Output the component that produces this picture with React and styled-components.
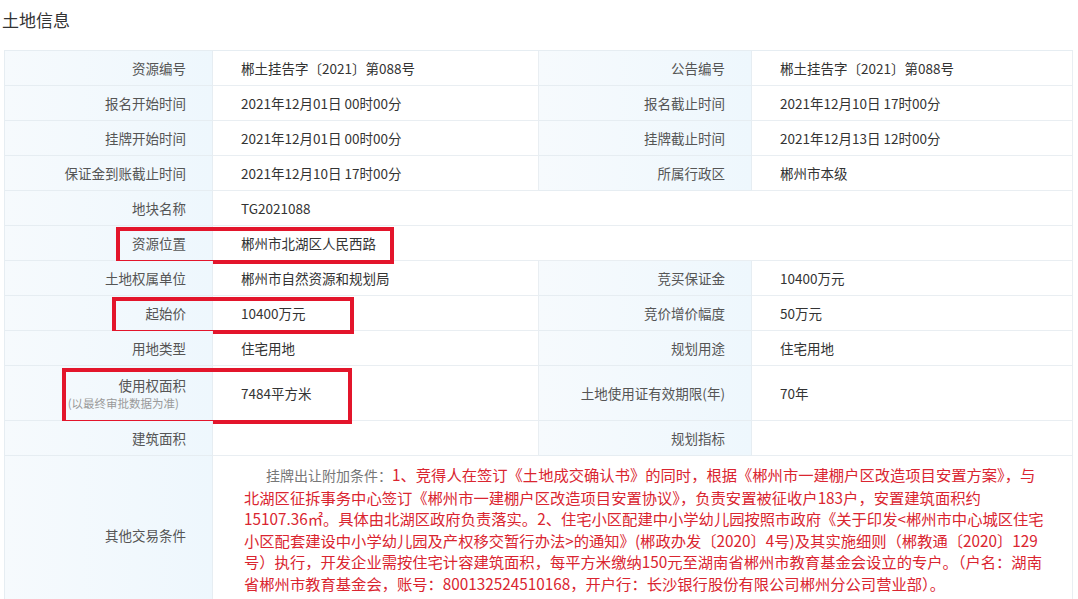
import React from 'react';
import styled, { createGlobalStyle } from 'styled-components';

const GlobalStyle = createGlobalStyle`
  body {
    margin: 0;
    background: #fff;
    font-family: "Noto Sans CJK SC", "Noto Sans", sans-serif;
  }
`;

const StyledWrapper = styled.div`
  width: 1078px;
  height: 599px;
  overflow: hidden;
  background: #fff;
`;

const StyledTitle = styled.h2`
  margin: 0;
  height: 50px;
  box-sizing: border-box;
  padding: 9px 0 0 2px;
  font-size: 17px;
  line-height: 22px;
  font-weight: 400;
  color: #333;
`;

const StyledTable = styled.div`
  margin-left: 4px;
  width: 1069px;
  border-left: 1px solid #e6edf2;
  border-top: 1px solid #e6edf2;
  box-sizing: border-box;
`;

const StyledRow = styled.div`
  position: relative;
  display: grid;
  grid-template-columns: 208px 326px 213px 321px;
  height: ${({ height }) => height || 35}px;
  box-sizing: border-box;
`;

const StyledLabel = styled.div`
  display: flex;
  flex-direction: column;
  justify-content: center;
  align-items: flex-end;
  padding-right: 26px;
  background: linear-gradient(to right, #f6fafd, #eef7fd);
  border-right: 1px solid #e6edf2;
  border-bottom: 1px solid #e6edf2;
  color: #555;
  font-size: 13.5px;
  line-height: 20px;
  white-space: nowrap;
`;

const StyledNote = styled.span`
  margin-right: 7px;
  font-size: 11.5px;
  line-height: 16px;
  color: #9a9a9a;
`;

const StyledValue = styled.div`
  grid-column: span ${({ span }) => span || 1};
  display: flex;
  align-items: center;
  padding-left: 28px;
  border-right: 1px solid #e9eef2;
  border-bottom: 1px solid #e9eef2;
  color: #333;
  font-size: 13.5px;
  white-space: nowrap;
`;

const StyledHighlight = styled.div`
  position: absolute;
  left: ${({ left }) => left}px;
  top: ${({ top }) => top}px;
  width: ${({ width }) => width}px;
  height: ${({ height }) => height}px;
  border: 4px solid #e3152b;
  box-sizing: border-box;
  pointer-events: none;
`;

const StyledTerms = styled.div`
  grid-column: span 3;
  padding: 8px 0 12px 31px;
  border-right: 1px solid #e9eef2;
  color: #da2530;
  font-size: 15.3px;
  line-height: 21.6px;
`;

const StyledLine = styled.span`
  display: block;
  white-space: nowrap;
`;

const StyledLead = styled.span`
  margin-left: 22px;
  color: #777;
  font-size: 14px;
`;

const rows = [
  ['资源编号', '郴土挂告字〔2021〕第088号', '公告编号', '郴土挂告字〔2021〕第088号'],
  ['报名开始时间', '2021年12月01日 00时00分', '报名截止时间', '2021年12月10日 17时00分'],
  ['挂牌开始时间', '2021年12月01日 00时00分', '挂牌截止时间', '2021年12月13日 12时00分'],
  ['保证金到账截止时间', '2021年12月10日 17时00分', '所属行政区', '郴州市本级'],
];

const termLines = [
  '北湖区征拆事务中心签订《郴州市一建棚户区改造项目安置协议》，负责安置被征收户183户，安置建筑面积约',
  '15107.36㎡。具体由北湖区政府负责落实。2、住宅小区配建中小学幼儿园按照市政府《关于印发<郴州市中心城区住宅',
  '小区配套建设中小学幼儿园及产权移交暂行办法>的通知》(郴政办发〔2020〕4号)及其实施细则（郴教通〔2020〕129',
  '号）执行，开发企业需按住宅计容建筑面积，每平方米缴纳150元至湖南省郴州市教育基金会设立的专户。（户名：湖南',
  '省郴州市教育基金会，账号：800132524510168，开户行：长沙银行股份有限公司郴州分公司营业部）。',
];

const App = () => (
  <StyledWrapper>
    <GlobalStyle />
    <StyledTitle>土地信息</StyledTitle>
    <StyledTable>
      {rows.map(([l1, v1, l2, v2]) => (
        <StyledRow key={l1}>
          <StyledLabel>{l1}</StyledLabel>
          <StyledValue>{v1}</StyledValue>
          <StyledLabel>{l2}</StyledLabel>
          <StyledValue>{v2}</StyledValue>
        </StyledRow>
      ))}
      <StyledRow>
        <StyledLabel>地块名称</StyledLabel>
        <StyledValue span={3}>TG2021088</StyledValue>
      </StyledRow>
      <StyledRow>
        <StyledLabel>资源位置</StyledLabel>
        <StyledValue span={3}>郴州市北湖区人民西路</StyledValue>
        <StyledHighlight left={111} top={1} width={278} height={37} />
      </StyledRow>
      <StyledRow>
        <StyledLabel>土地权属单位</StyledLabel>
        <StyledValue>郴州市自然资源和规划局</StyledValue>
        <StyledLabel>竞买保证金</StyledLabel>
        <StyledValue>10400万元</StyledValue>
      </StyledRow>
      <StyledRow>
        <StyledLabel>起始价</StyledLabel>
        <StyledValue>10400万元</StyledValue>
        <StyledLabel>竞价增价幅度</StyledLabel>
        <StyledValue>50万元</StyledValue>
        <StyledHighlight left={107} top={1} width={242} height={37} />
      </StyledRow>
      <StyledRow>
        <StyledLabel>用地类型</StyledLabel>
        <StyledValue>住宅用地</StyledValue>
        <StyledLabel>规划用途</StyledLabel>
        <StyledValue>住宅用地</StyledValue>
      </StyledRow>
      <StyledRow height={55}>
        <StyledLabel>
          <span>使用权面积</span>
          <StyledNote>(以最终审批数据为准)</StyledNote>
        </StyledLabel>
        <StyledValue>7484平方米</StyledValue>
        <StyledLabel>土地使用证有效期限(年)</StyledLabel>
        <StyledValue>70年</StyledValue>
        <StyledHighlight left={57} top={2} width={290} height={56} />
      </StyledRow>
      <StyledRow>
        <StyledLabel>建筑面积</StyledLabel>
        <StyledValue />
        <StyledLabel>规划指标</StyledLabel>
        <StyledValue />
      </StyledRow>
      <StyledRow height={158}>
        <StyledLabel>其他交易条件</StyledLabel>
        <StyledTerms>
          <StyledLine>
            <StyledLead>挂牌出让附加条件：</StyledLead>
            1、竞得人在签订《土地成交确认书》的同时，根据《郴州市一建棚户区改造项目安置方案》，与
          </StyledLine>
          {termLines.map((line) => (
            <StyledLine key={line}>{line}</StyledLine>
          ))}
        </StyledTerms>
      </StyledRow>
    </StyledTable>
  </StyledWrapper>
);

export default App;
